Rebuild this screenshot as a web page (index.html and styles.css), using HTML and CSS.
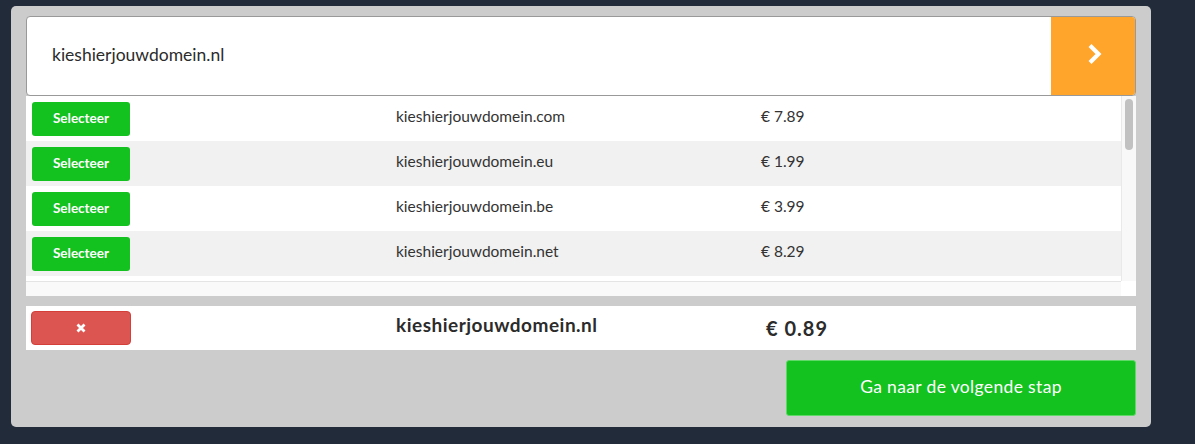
FILE: index.html
```html
<!DOCTYPE html>
<html>
<head>
    <title>Domein kiezen</title>
    <link rel="stylesheet" href="styles.css">
</head>
<body>
    <div class="panel">
        <form class="search" onsubmit="return false">
            <input type="text" class="search-input" name="domain" value="kieshierjouwdomein.nl">
            <button type="submit" class="search-go">
                <svg width="16" height="22" viewBox="0 0 16 22"><polyline points="3,2.5 11.5,11 3,19.5" fill="none" stroke="#fff" stroke-width="4.2"/></svg>
            </button>
        </form>

        <div class="results">
            <div class="results-list">
                <div class="result-row"><button class="btn-select">Selecteer</button><span class="domain">kieshierjouwdomein.com</span><span class="price">€ 7.89</span></div>
                <div class="result-row"><button class="btn-select">Selecteer</button><span class="domain">kieshierjouwdomein.eu</span><span class="price">€ 1.99</span></div>
                <div class="result-row"><button class="btn-select">Selecteer</button><span class="domain">kieshierjouwdomein.be</span><span class="price">€ 3.99</span></div>
                <div class="result-row"><button class="btn-select">Selecteer</button><span class="domain">kieshierjouwdomein.net</span><span class="price">€ 8.29</span></div>
            </div>
            <div class="vscroll"><div class="vscroll-thumb"></div></div>
            <div class="hscroll"></div>
            <div class="scroll-corner"></div>
        </div>

        <div class="chosen">
            <button class="btn-remove">
                <svg width="10" height="10" viewBox="0 0 10 10"><path d="M1.5 1.5 L8.5 8.5 M8.5 1.5 L1.5 8.5" stroke="#fff" stroke-width="2.8"/></svg>
            </button>
            <span class="chosen-domain">kieshierjouwdomein.nl</span>
            <span class="chosen-price">€ 0.89</span>
        </div>

        <div class="actions">
            <button class="btn-next">Ga naar de volgende stap</button>
        </div>
    </div>
</body>
</html>
```

FILE: styles.css
```css
body {
    background-color: #222b3a;
    font-family: "Lato", "Noto Sans", sans-serif;
    margin: 0;
    padding: 0;
}

.panel {
    background-color: #cccccc;
    width: 1140px;
    margin: 6px 0 0 11px;
    padding: 10px 15px 11px 15px;
    box-sizing: border-box;
    border-radius: 5px;
}

button {
    font-family: inherit;
    cursor: pointer;
}

/* search bar */
.search {
    display: flex;
    height: 80px;
    margin: 0;
    background-color: #fff;
    border: 1px solid #999;
    border-radius: 4px;
    overflow: hidden;
    box-sizing: border-box;
}

.search-input {
    flex: 1;
    border: none;
    outline: none;
    padding: 0 0 4px 25px;
    font-family: inherit;
    font-size: 17.5px;
    color: #2b2b2b;
    background: transparent;
}

.search-go {
    width: 84px;
    border: none;
    background-color: #ffa52b;
    display: flex;
    align-items: center;
    justify-content: center;
    padding: 0 0 5px 4px;
}

/* result list with its scrollbars */
.results {
    display: grid;
    grid-template-columns: 1fr 15px;
    grid-template-rows: 185px 15px;
    background-color: #fff;
}

.results-list {
    overflow: hidden;
}

.vscroll {
    background-color: #f8f8f8;
    border-left: 1px solid #e9e9e9;
    padding: 3px 3px 0 3px;
}

.vscroll-thumb {
    width: 8px;
    height: 51px;
    background-color: #c1c1c1;
    border-radius: 4px;
}

.hscroll {
    background-color: #f9f9f9;
    border-top: 1px solid #e4e4e4;
}

.scroll-corner {
    background-color: #fff;
}

.result-row {
    display: grid;
    grid-template-columns: 370px 365px 1fr;
    align-items: center;
    height: 45px;
    font-size: 15.5px;
    color: #333;
}

.result-row:nth-child(even) {
    background-color: #f1f1f1;
}

.domain,
.price {
    padding-bottom: 5px;
}

.btn-select {
    margin-left: 6px;
    width: 98px;
    height: 34px;
    border: none;
    border-radius: 3px;
    background-color: #13c11f;
    color: #fff;
    font-size: 13.5px;
    font-weight: 700;
    padding: 0 0 2px;
}

/* chosen domain */
.chosen {
    display: grid;
    grid-template-columns: 370px 370px 1fr;
    align-items: center;
    height: 44px;
    margin-top: 10px;
    background-color: #fff;
    color: #2b2b2b;
    font-weight: 700;
}

.btn-remove {
    margin-left: 5px;
    width: 100px;
    height: 34px;
    border: 1px solid #d43f3a;
    border-radius: 4px;
    background-color: #dc5550;
    display: flex;
    align-items: center;
    justify-content: center;
    padding: 0;
}

.chosen-domain {
    font-size: 19px;
    letter-spacing: 0.5px;
    padding-bottom: 7px;
}

.chosen-price {
    font-size: 20px;
    letter-spacing: 1px;
}

/* next step */
.actions {
    display: flex;
    justify-content: flex-end;
    margin-top: 10px;
}

.btn-next {
    width: 350px;
    height: 56px;
    border: 1px solid #5fd868;
    border-radius: 3px;
    background-color: #13c11f;
    color: #fff;
    font-size: 17.5px;
    letter-spacing: 0.35px;
    padding: 0 0 3px;
}
```
